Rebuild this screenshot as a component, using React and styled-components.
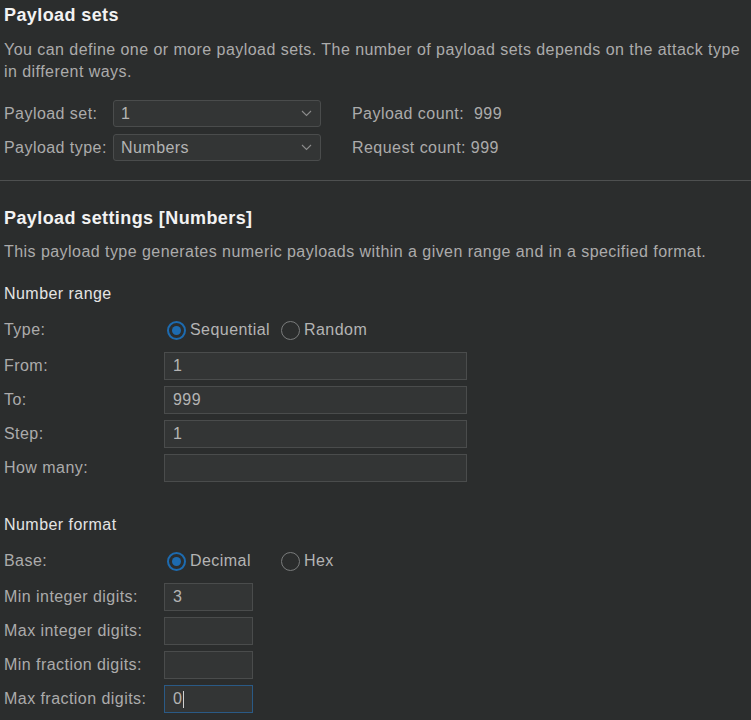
import React from 'react';
import styled, {createGlobalStyle} from 'styled-components';

const GlobalStyle = createGlobalStyle`
  html, body {
    margin: 0;
    padding: 0;
    background: #2b2d2d;
  }
  body {
    font-family: "Liberation Sans", Arial, sans-serif;
    color: #b2b2b2;
  }
`;

const Page = styled.div`
  width: 751px;
  height: 720px;
  overflow: hidden;
  background: #2b2d2d;
  font-size: 16px;
  letter-spacing: 0.45px;
`;

const Section = styled.section`
  padding: 0 0 0 4px;
`;

const Heading = styled.h2`
  margin: 0;
  padding-top: 4px;
  font-size: 18px;
  letter-spacing: 0.4px;
  font-weight: bold;
  color: #f2f2f2;
  line-height: 22px;
`;

const Description = styled.p`
  margin: ${p => p.$top}px 0 0;
  line-height: 22px;
  color: #ababab;
`;

const SetGrid = styled.div`
  display: grid;
  grid-template-columns: 109px 208px auto;
  row-gap: 7px;
  margin-top: 17px;
  align-items: center;
`;

const Label = styled.span`
  color: #ababab;
  line-height: 22px;
  white-space: nowrap;
`;

const Select = styled.div`
  height: 27px;
  box-sizing: border-box;
  border: 1px solid #4a4c4c;
  border-radius: 3px;
  background: #333535;
  display: flex;
  align-items: center;
  justify-content: space-between;
  padding: 0 8px 0 7px;
  color: #b4b4b4;
`;

const Count = styled.span`
  margin-left: 31px;
  color: #ababab;
  white-space: pre;
`;

const Divider = styled.hr`
  border: none;
  height: 1px;
  background: #4e5050;
  margin: 19px 0 0;
`;

const SettingsHeading = styled(Heading)`
  padding-top: 26px;
`;

const SubHeading = styled.h3`
  margin: ${p => p.$top}px 0 0;
  font-size: 16px;
  font-weight: normal;
  color: #e4e4e4;
  line-height: 22px;
`;

const FormGrid = styled.div`
  display: grid;
  grid-template-columns: 160px auto;
  row-gap: 6px;
  margin-top: 14px;
  align-items: center;
`;

const RadioLabel = styled(Label)`
  margin-bottom: 5px;
`;

const RadioRow = styled.div`
  display: flex;
  align-items: center;
  height: 22px;
  padding-left: 3px;
  margin-bottom: 5px;
`;

const RadioOption = styled.label`
  display: flex;
  align-items: center;
  gap: 4px;
  width: ${p => p.$width}px;
  color: #b4b4b4;
`;

const RadioCircle = styled.span`
  width: 19px;
  height: 19px;
  flex: none;
  box-sizing: border-box;
  border-radius: 50%;
  border: ${p => (p.$checked ? '2.5px solid #1d6bb0' : '1px solid #7a7c7c')};
  background: #2b2d2d;
  display: flex;
  align-items: center;
  justify-content: center;
  &::after {
    content: '';
    display: ${p => (p.$checked ? 'block' : 'none')};
    width: 9px;
    height: 9px;
    border-radius: 50%;
    background: #1d6bb0;
  }
`;

const Input = styled.div`
  width: ${p => p.$width}px;
  height: 28px;
  box-sizing: border-box;
  border: 1px solid ${p => (p.$focused ? '#2a5a86' : '#4a4c4c')};
  background: #333535;
  display: flex;
  align-items: center;
  padding-left: 8px;
  color: #b4b4b4;
`;

const Caret = styled.span`
  display: inline-block;
  width: 1px;
  height: 17px;
  background: #d0d0d0;
  margin-left: 1px;
`;

const Chevron = () => (
  <svg width="11" height="7" viewBox="0 0 11 7" fill="none">
    <path d="M1 1 L5.5 5.5 L10 1" stroke="#8c8c8c" strokeWidth="1.1" />
  </svg>
);

const Radio = ({checked, width, children}) => (
  <RadioOption $width={width}>
    <RadioCircle $checked={checked} />
    {children}
  </RadioOption>
);

export default function App() {
  return (
    <Page>
      <GlobalStyle />
      <Section>
        <Heading>Payload sets</Heading>
        <Description $top={13}>
          You can define one or more payload sets. The number of payload sets depends on the attack type in different ways.
        </Description>
        <SetGrid>
          <Label>Payload set:</Label>
          <Select>
            <span>1</span>
            <Chevron />
          </Select>
          <Count>Payload count:  999</Count>
          <Label>Payload type:</Label>
          <Select>
            <span>Numbers</span>
            <Chevron />
          </Select>
          <Count>Request count: 999</Count>
        </SetGrid>
      </Section>
      <Divider />
      <Section>
        <SettingsHeading>Payload settings [Numbers]</SettingsHeading>
        <Description $top={12}>
          This payload type generates numeric payloads within a given range and in a specified format.
        </Description>
        <SubHeading $top={20}>Number range</SubHeading>
        <FormGrid>
          <RadioLabel>Type:</RadioLabel>
          <RadioRow>
            <Radio checked width={114}>Sequential</Radio>
            <Radio width={90}>Random</Radio>
          </RadioRow>
          <Label>From:</Label>
          <Input $width={303}>1</Input>
          <Label>To:</Label>
          <Input $width={303}>999</Input>
          <Label>Step:</Label>
          <Input $width={303}>1</Input>
          <Label>How many:</Label>
          <Input $width={303} />
        </FormGrid>
        <SubHeading $top={32}>Number format</SubHeading>
        <FormGrid>
          <RadioLabel>Base:</RadioLabel>
          <RadioRow>
            <Radio checked width={114}>Decimal</Radio>
            <Radio width={90}>Hex</Radio>
          </RadioRow>
          <Label>Min integer digits:</Label>
          <Input $width={89}>3</Input>
          <Label>Max integer digits:</Label>
          <Input $width={89} />
          <Label>Min fraction digits:</Label>
          <Input $width={89} />
          <Label>Max fraction digits:</Label>
          <Input $width={89} $focused>
            0<Caret />
          </Input>
        </FormGrid>
      </Section>
    </Page>
  );
}
